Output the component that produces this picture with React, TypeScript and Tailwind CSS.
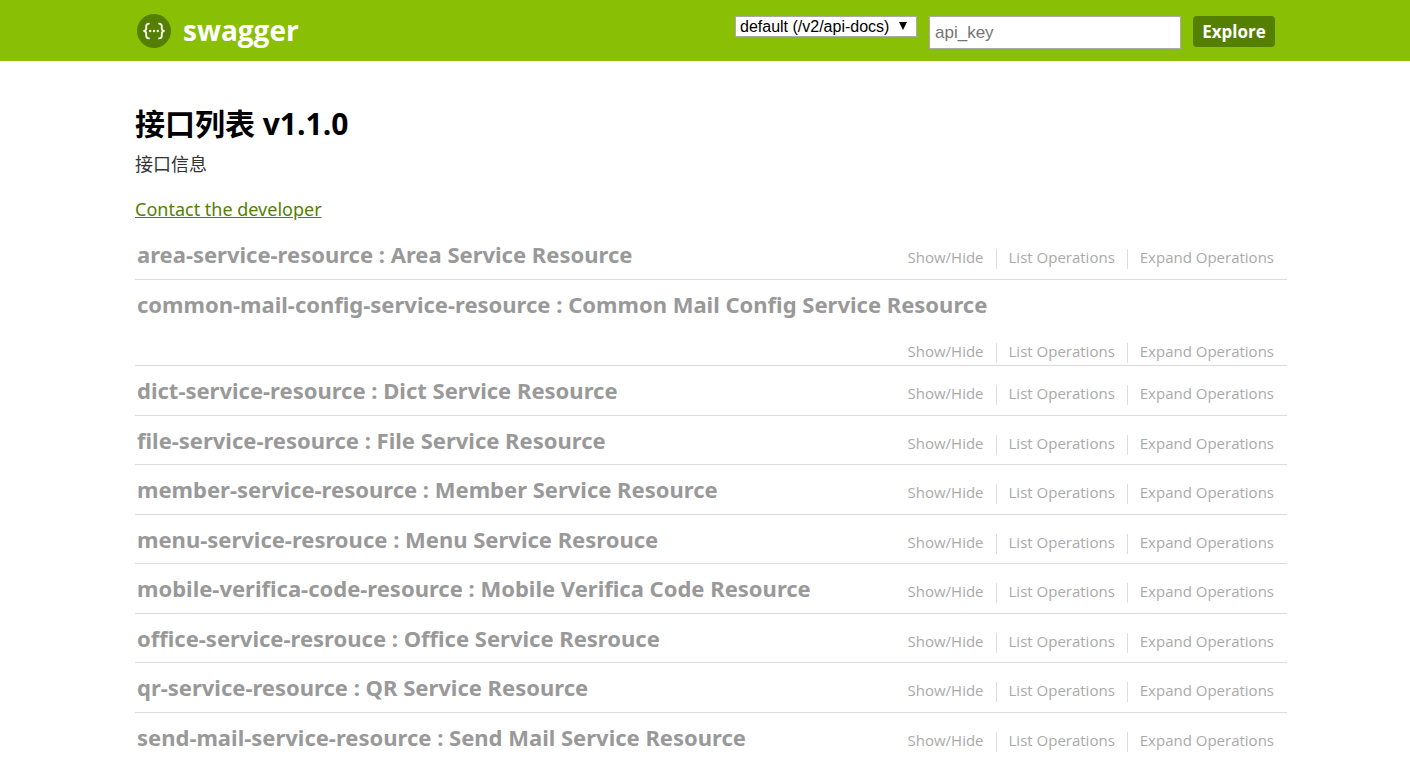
import React, { useState } from 'react'

const resources = [
  { path: 'area-service-resource', name: 'Area Service Resource' },
  { path: 'common-mail-config-service-resource', name: 'Common Mail Config Service Resource' },
  { path: 'dict-service-resource', name: 'Dict Service Resource' },
  { path: 'file-service-resource', name: 'File Service Resource' },
  { path: 'member-service-resource', name: 'Member Service Resource' },
  { path: 'menu-service-resrouce', name: 'Menu Service Resrouce' },
  { path: 'mobile-verifica-code-resource', name: 'Mobile Verifica Code Resource' },
  { path: 'office-service-resrouce', name: 'Office Service Resrouce' },
  { path: 'qr-service-resource', name: 'QR Service Resource' },
  { path: 'send-mail-service-resource', name: 'Send Mail Service Resource' },
]

const actions = ['Show/Hide', 'List Operations', 'Expand Operations']

const SwaggerLogo = () => (
  <svg viewBox="0 0 36 36" className="h-9 w-9" aria-hidden="true">
    <circle cx="19" cy="19" r="17" fill="#547f00" />
    <g fill="none" stroke="#f4f8ea" strokeWidth="1.9" strokeLinecap="round" strokeLinejoin="round">
      <path d="M14 11.6c-2.2 0-2.8.7-2.8 2.6v2c0 1.7-.6 2.6-2.2 2.8 1.6.2 2.2 1.1 2.2 2.8v2c0 1.9.6 2.6 2.8 2.6" />
      <path d="M24 11.6c2.2 0 2.8.7 2.8 2.6v2c0 1.7.6 2.6 2.2 2.8-1.6.2-2.2 1.1-2.2 2.8v2c0 1.9-.6 2.6-2.8 2.6" />
    </g>
    <g fill="#f4f8ea">
      <circle cx="15.2" cy="19" r="1.2" />
      <circle cx="19" cy="19" r="1.2" />
      <circle cx="22.8" cy="19" r="1.2" />
    </g>
  </svg>
)

const Header = () => {
  const [apiKey, setApiKey] = useState('')

  return (
    <header className="bg-[#89bf04] py-3 pr-[135px] pl-[135px]">
      <div className="flex items-start justify-between">
        <a href="#" className="flex items-center gap-3 text-[28px] leading-9 font-bold text-white">
          <SwaggerLogo />
          swagger
        </a>
        <form className="flex items-start gap-3 pt-1" onSubmit={(e) => e.preventDefault()}>
          <div className="relative">
            <select
              aria-label="API docs"
              className="block h-[21px] w-[182px] appearance-none border border-[#a9a9a9] bg-white pl-1 font-['Liberation_Sans',sans-serif] text-base leading-[19px] text-black"
            >
              <option>default (/v2/api-docs)</option>
            </select>
            <svg viewBox="0 0 8 8" className="pointer-events-none absolute top-[6px] right-[10px] h-2 w-2" aria-hidden="true">
              <path d="M0 0h8L4 8z" fill="#000" />
            </svg>
          </div>
          <input
            type="text"
            aria-label="api_key"
            placeholder="api_key"
            value={apiKey}
            onChange={(e) => setApiKey(e.target.value)}
            className="h-[33px] w-[252px] border border-[#a9a9a9] bg-white px-[5px] font-['Liberation_Sans',sans-serif] text-[17px] text-black placeholder:text-[#757575]"
          />
          <button type="submit" className="h-[31px] w-[82px] rounded bg-[#547f00] text-[17px] leading-[31px] font-bold text-white">
            Explore
          </button>
        </form>
      </div>
    </header>
  )
}

// The actions drop below the heading when the heading is too long for one line
const ResourceRow = ({ path, name }: { path: string; name: string }) => (
  <li className="flex flex-wrap items-start justify-between border-b border-[#dddddd] pt-1 pl-[2px] last:border-b-0 odd:pb-px">
    <h2 className="mr-10 pt-1 pb-2 font-['Noto_Sans',sans-serif] text-[22px] leading-8 font-bold text-[#999999]">
      <a href={`#${path}`}>{path}</a> : {name}
    </h2>
    <ul className="ml-auto flex pt-[15px] pr-[13px] pb-[2px]">
      {actions.map((action) => (
        <li
          key={action}
          className="h-5 border-r border-[#dddddd] px-3 text-[15px] leading-4 text-[#aaaaaa] last:border-r-0 last:pr-0"
        >
          <a href={`#${path}`}>{action}</a>
        </li>
      ))}
    </ul>
  </li>
)

export default function App() {
  return (
    <div className="bg-white font-['Open_Sans','Noto_Sans_CJK_SC',sans-serif]">
      <Header />
      <main className="pt-[43px] pr-[123px] pl-[135px]">
        <h1 className="text-[30px] leading-10 font-bold text-black">接口列表 v1.1.0</h1>
        <p className="text-lg leading-10 text-[#333333]">接口信息</p>
        <p className="mt-[5px] font-['Noto_Sans',sans-serif] text-lg leading-10">
          <a href="#contact" className="text-[#547f00] underline">
            Contact the developer
          </a>
        </p>
        <ul className="mt-px">
          {resources.map((resource) => (
            <ResourceRow key={resource.path} {...resource} />
          ))}
        </ul>
      </main>
    </div>
  )
}
